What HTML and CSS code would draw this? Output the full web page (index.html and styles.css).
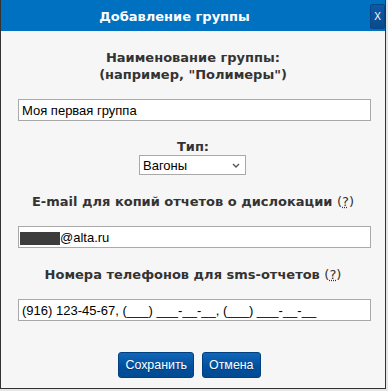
FILE: index.html
```html
<!DOCTYPE html>
<html lang="ru">
<head>
  <meta charset="UTF-8" />
  <title>Добавление группы</title>
  <link rel="stylesheet" href="styles.css">
</head>
<body>

<div class="dialog">
  <div class="dialog-header">
    <span class="dialog-title">Добавление группы</span>
    <span class="close-btn">X</span>
  </div>

  <form class="dialog-body">
    <!-- group name -->
    <div class="label label-name">Наименование группы:<br>(например, "Полимеры")</div>
    <input class="text-input" type="text" value="Моя первая группа">

    <!-- type -->
    <div class="label label-type">Тип:</div>
    <div class="select-row">
      <div class="select-wrap">
        <select class="type-select">
          <option>Вагоны</option>
          <option>Контейнеры</option>
        </select>
        <svg class="select-arrow" width="8" height="5" viewBox="0 0 8 5">
          <path d="M1 1 L4 4 L7 1" fill="none" stroke="#555" stroke-width="1.4"/>
        </svg>
      </div>
    </div>

    <!-- email -->
    <div class="label label-email">E-mail для копий отчетов о дислокации <span class="help">(<u>?</u>)</span></div>
    <div class="text-input fake-input"><span class="redacted"></span>@alta.ru</div>

    <!-- phones -->
    <div class="label label-phone">Номера телефонов для sms-отчетов <span class="help">(<u>?</u>)</span></div>
    <input class="text-input" type="text" value="(916) 123-45-67, (___) ___-__-__, (___) ___-__-__">

    <div class="buttons">
      <button type="button" class="btn">Сохранить</button>
      <button type="button" class="btn">Отмена</button>
    </div>
  </form>
</div>

</body>
</html>
```

FILE: styles.css
```css
body {
  margin: 0;
  background: #e6e6e6;
  font-family: 'DejaVu Sans', sans-serif;
}
.dialog {
  width: 384px;
  height: 388px;
  background: #f6f6f6;
  border: 1px solid #333;
  border-top: none;
}
.dialog-header {
  position: relative;
  height: 31px;
  background: #0070c0;
  display: flex;
  align-items: center;
  justify-content: center;
}
.dialog-title {
  color: #fff;
  font-weight: bold;
  font-size: 13px;
  margin-left: -37px;
  margin-top: 1px;
}
.close-btn {
  position: absolute;
  top: 4px;
  right: 0;
  width: 15px;
  height: 25px;
  box-sizing: border-box;
  background: linear-gradient(#0d5aa8, #0a4a8e);
  border: 1px solid #0a4584;
  border-radius: 2px;
  color: #fff;
  font-family: 'Liberation Sans', sans-serif;
  font-size: 10px;
  display: flex;
  align-items: center;
  justify-content: center;
}
.dialog-body {
  margin: 0;
  display: flex;
  flex-direction: column;
}
.label {
  color: #333;
  font-weight: bold;
  font-size: 13px;
  line-height: 17px;
  text-align: center;
}
.label-name { margin-top: 18px; }
.label-type { margin-top: 17px; }
.label-email { margin-top: 18px; }
.label-phone { margin-top: 18px; }
.help {
  font-weight: normal;
}
.help u {
  text-decoration: underline dotted;
}
.text-input {
  margin: 16px 0 0 17px;
  width: 353px;
  height: 22px;
  box-sizing: border-box;
  padding: 0 3px;
  border: 1px solid #a9a9a9;
  background: #fff;
  color: #000;
  font-family: 'Liberation Sans', sans-serif;
  font-size: 13px;
  outline: none;
}
.fake-input {
  display: flex;
  align-items: center;
  padding-left: 1px;
}
.redacted {
  display: inline-block;
  width: 40px;
  height: 13px;
  margin-top: 2px;
  background: #3c3c3c;
}
.select-row {
  display: flex;
  justify-content: center;
  padding-right: 1px;
}
.select-wrap {
  position: relative;
}
.type-select {
  display: block;
  width: 107px;
  height: 20px;
  border: 1px solid #a9a9a9;
  border-radius: 0;
  background: #fff;
  color: #000;
  font-family: 'Liberation Sans', sans-serif;
  font-size: 13px;
  padding: 0 3px;
  appearance: none;
  -webkit-appearance: none;
  outline: none;
}
.select-arrow {
  position: absolute;
  right: 6px;
  top: 8px;
  pointer-events: none;
}
.buttons {
  margin-top: 31px;
  display: flex;
  justify-content: center;
  gap: 8px;
  padding-right: 7px;
}
.btn {
  height: 26px;
  padding: 0 6px;
  border: 1px solid #003f80;
  border-radius: 3px;
  background: linear-gradient(#1467b8, #00509e 55%, #004a92);
  color: #fff;
  font-family: 'Liberation Sans', sans-serif;
  font-size: 12.4px;
  text-shadow: 0 1px 0 rgba(0,0,0,0.3);
  cursor: pointer;
}
```
